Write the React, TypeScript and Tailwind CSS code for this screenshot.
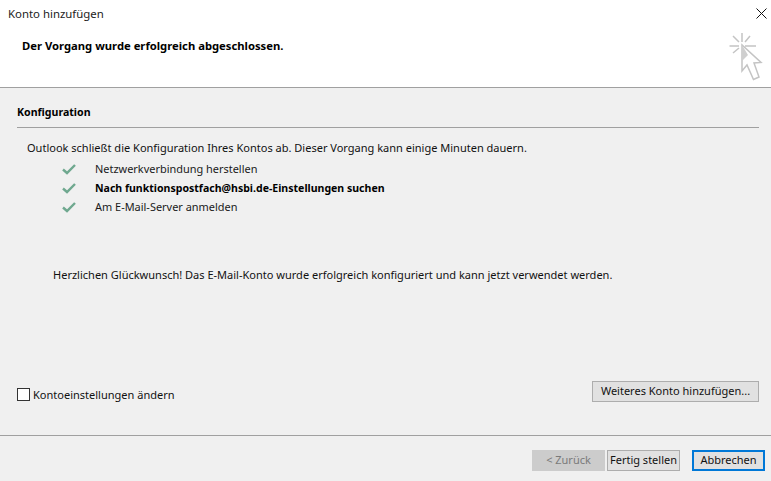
import React from "react";

const font = { fontFamily: '"Noto Sans", "Open Sans", sans-serif' };

const CheckMark = () => (
  <svg width="14" height="11" viewBox="0 0 14 11" fill="none">
    <path d="M1 5.5 L5 9 L13 1" stroke="#6fa88f" strokeWidth="2.4" />
  </svg>
);

const CursorIcon = () => (
  <svg width="36" height="50" viewBox="0 0 36 50" fill="none">
    {/* sparks */}
    <path
      d="M13 1V10M.5 14H10M16 14H27M4 4L10 10M21 4L16 10M4 21L10 16"
      stroke="#c4c4c4"
      strokeWidth="1.5"
    />
    {/* arrow */}
    <path d="M13 13V39L18 33L24.5 47.5L30 45L25 31L32 30.5Z" fill="#fff" stroke="#c4c4c4" strokeWidth="1.5" />
    <path d="M13 13V29L19 23Z" fill="#cfcfcf" />
  </svg>
);

const Step = ({ label, bold }: { label: string; bold?: boolean }) => (
  <div className="flex h-[19px] items-center">
    <div className="flex w-[33px] justify-start">
      <CheckMark />
    </div>
    <span className={bold ? "text-[10.55px] font-bold text-black" : "text-[10.95px] text-[#1a1a1a]"}>{label}</span>
  </div>
);

const WinButton = ({
  children,
  className,
}: {
  children: React.ReactNode;
  className: string;
}) => (
  <button className={`flex items-center justify-center border text-[11px] ${className}`}>
    {children}
  </button>
);

export default function App() {
  return (
    <div style={font} className="flex h-[481px] w-[771px] flex-col overflow-hidden bg-[#f0f0f0] text-[11.03px] text-[#111]">
      {/* Header */}
      <div className="flex h-[88px] shrink-0 justify-between border-b border-[#a0a0a0] bg-white">
        <div className="flex flex-col">
          <div className="pl-2 pt-[6px] text-[11.4px] leading-4 text-[#222]">Konto hinzufügen</div>
          <div className="pl-[22px] pt-[16px] text-[11.25px] font-bold leading-4 text-black">
            Der Vorgang wurde erfolgreich abgeschlossen.
          </div>
        </div>
        <div className="flex flex-col items-end pr-[1px]">
          <svg className="mr-[3px] mt-[8px]" width="11" height="11" viewBox="0 0 11 11" fill="none">
            <path d="M.5 .5L10.5 10.5M10.5 .5L.5 10.5" stroke="#111" strokeWidth="1" />
          </svg>
          <div className="mr-[5px] mt-[13px]">
            <CursorIcon />
          </div>
        </div>
      </div>

      {/* Body */}
      <div className="flex flex-1 flex-col pl-[17px] pr-[12px]">
        <div className="pt-[16px] text-[10.6px] font-bold leading-4 text-black">Konfiguration</div>
        <div className="mt-[7px] h-px bg-[#a0a0a0]" />
        <div className="pl-[10px] pt-[12px] leading-4">
          Outlook schließt die Konfiguration Ihres Kontos ab. Dieser Vorgang kann einige Minuten dauern.
        </div>
        <div className="flex flex-col pl-[45px] pt-[4px]">
          <Step label="Netzwerkverbindung herstellen" />
          <Step label="Nach funktionspostfach@hsbi.de-Einstellungen suchen" bold />
          <Step label="Am E-Mail-Server anmelden" />
        </div>
        <div className="pl-[36px] pt-[50px] leading-4">
          Herzlichen Glückwunsch! Das E-Mail-Konto wurde erfolgreich konfiguriert und kann jetzt verwendet werden.
        </div>
        <div className="flex items-start justify-between pt-[98px]">
          <label className="mt-[6px] flex items-center gap-[3px] leading-4">
            <span className="-mt-px block h-[13px] w-[13px] border border-[#333] bg-white" />
            <span>Kontoeinstellungen ändern</span>
          </label>
          <WinButton className="h-[21px] w-[167px] border-[#adadad] bg-[#e1e1e1]">Weiteres Konto hinzufügen...</WinButton>
        </div>
      </div>

      {/* Footer */}
      <div className="flex h-[46px] shrink-0 items-start justify-end gap-[2px] border-t border-[#a0a0a0] pr-[6px] pt-[14px]">
        <WinButton className="h-[21px] w-[73px] border-[#cccccc] bg-[#cccccc] text-[#7a7a7a]">&lt; Zurück</WinButton>
        <WinButton className="h-[21px] w-[73px] border-[#adadad] bg-[#e1e1e1] text-[10.8px]">Fertig stellen</WinButton>
        <WinButton className="ml-[10px] h-[21px] w-[73px] border-2 border-[#0078d7] bg-[#e1e1e1]">Abbrechen</WinButton>
      </div>
    </div>
  );
}
